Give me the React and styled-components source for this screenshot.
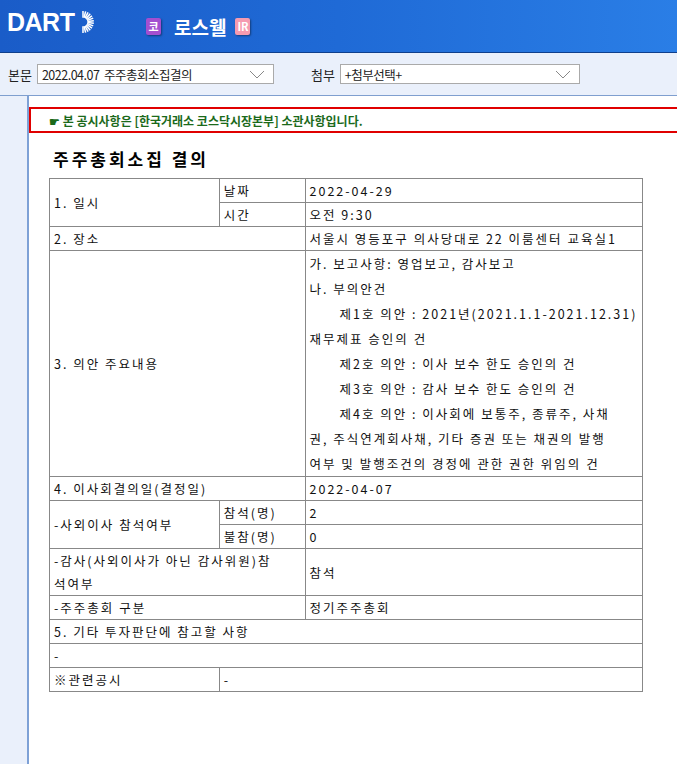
import React from "react";
import styled, { createGlobalStyle } from "styled-components";

const G = createGlobalStyle`
  body{margin:0;font-family:"Noto Sans CJK KR","Noto Sans",sans-serif;background:#fff;}
`;
const Page = styled.div`width:677px;height:764px;overflow:hidden;display:flex;flex-direction:column;`;
const Header = styled.div`
  height:52px;flex:none;display:flex;align-items:center;padding-left:7px;
  background:linear-gradient(90deg,#1a5cc8 0%,#1f6ad6 50%,#2a7ee6 100%);
  border-bottom:1px solid #0f3f8c;
`;
const Logo = styled.div`color:#fff;font-family:"Liberation Sans",Arial,sans-serif;font-weight:700;font-size:25px;letter-spacing:-0.5px;display:flex;align-items:center;width:139px;margin-top:-8px;`;
const Badge = styled.span`
  display:inline-flex;align-items:center;justify-content:center;width:15px;height:17px;
  background:${p=>p.$bg};color:#fff;font-size:11px;font-weight:700;border-radius:2px;
  box-shadow:1px 1px 2px rgba(0,0,0,.4);
`;
const Company = styled.span`color:#fff;font-weight:700;font-size:19px;margin:0 9px 0 13px;`;
const Toolbar = styled.div`
  height:42px;flex:none;background:#eaf0fb;display:flex;align-items:center;padding-left:8px;
  border-bottom:1px solid #7f9fcf;color:#222;
`;
const Label = styled.span`margin-right:5px;font-size:13px;`;
const Select = styled.div`
  width:${p=>p.$w}px;height:20px;border:1px solid #aaa;background:#fff;display:flex;align-items:center;
  justify-content:space-between;padding:0 8px 0 4px;box-sizing:border-box;font-size:12.5px;letter-spacing:-0.5px;
  margin-right:${p=>p.$mr||0}px;
`;
const Body = styled.div`flex:1;display:flex;`;
const Gutter = styled.div`width:27px;background:#eaf0fb;border-right:2px solid #7ea1d6;`;
const Content = styled.div`flex:1;padding-top:11px;`;
const Notice = styled.div`
  height:22px;border:2px solid #e00000;border-right:none;display:flex;align-items:center;padding-left:18px;
  font-size:12px;font-weight:700;color:#1b6a1b;
`;
const Title = styled.h1`margin:13px 0 0 24px;font-size:17px;font-weight:700;letter-spacing:3px;color:#000;height:32px;`;
const Table = styled.table`
  margin-left:20px;width:594px;border-collapse:collapse;font-size:12.5px;letter-spacing:2px;color:#111;
  td{border:1px solid #888;padding:0 4px;height:23px;vertical-align:middle;line-height:23px;}
`;
const Cell = styled.td`vertical-align:top !important;line-height:25px !important;`;
const Indent = styled.span`padding-left:30px;`;
const Chev = () => (
  <svg width="16" height="9" viewBox="0 0 16 9"><path d="M1 1l7 7 7-7" fill="none" stroke="#888" strokeWidth="1"/></svg>
);

export default function App(){
  return (<Page><G/>
    <Header>
      <Logo>DART<svg width="24" height="24" viewBox="0 0 22 22" style={{marginLeft:-3}}>
        {Array.from({length:14}).map((_,i)=>{const a=-Math.PI/2+i*Math.PI/13;return <line key={i} x1={11+4*Math.cos(a)} y1={11+4*Math.sin(a)} x2={11+10*Math.cos(a)} y2={11+10*Math.sin(a)} stroke="#fff" strokeWidth="1.4"/>})}
      </svg></Logo>
      <Badge $bg="#a34fd0">코</Badge>
      <Company>로스웰</Company>
      <Badge $bg="#f59bb0">IR</Badge>
    </Header>
    <Toolbar>
      <Label>본문</Label>
      <Select $w={237} $mr={37}>2022.04.07 &nbsp;주주총회소집결의<Chev/></Select>
      <Label>첨부</Label>
      <Select $w={240}>+첨부선택+<Chev/></Select>
    </Toolbar>
    <Body>
      <Gutter/>
      <Content>
        <Notice>☛ 본 공시사항은 [한국거래소 코스닥시장본부] 소관사항입니다.</Notice>
        <Title>주주총회소집 결의</Title>
        <Table><colgroup><col width="170"/><col width="86"/><col width="338"/></colgroup><tbody>
          <tr><td rowSpan={2}>1. 일시</td><td>날짜</td><td>2022-04-29</td></tr>
          <tr><td>시간</td><td>오전 9:30</td></tr>
          <tr><td colSpan={2}>2. 장소</td><td>서울시 영등포구 의사당대로 22 이룸센터 교육실1</td></tr>
          <tr><td colSpan={2}>3. 의안 주요내용</td><Cell>
            가. 보고사항: 영업보고, 감사보고<br/>나. 부의안건<br/>
            <Indent>제1호 의안 : 2021년(2021.1.1-2021.12.31)</Indent><br/>재무제표 승인의 건<br/>
            <Indent>제2호 의안 : 이사 보수 한도 승인의 건</Indent><br/>
            <Indent>제3호 의안 : 감사 보수 한도 승인의 건</Indent><br/>
            <Indent>제4호 의안 : 이사회에 보통주, 종류주, 사채</Indent><br/>권, 주식연계회사채, 기타 증권 또는 채권의 발행<br/>여부 및 발행조건의 경정에 관한 권한 위임의 건
          </Cell></tr>
          <tr><td colSpan={2}>4. 이사회결의일(결정일)</td><td>2022-04-07</td></tr>
          <tr><td rowSpan={2}>-사외이사 참석여부</td><td>참석(명)</td><td>2</td></tr>
          <tr><td>불참(명)</td><td>0</td></tr>
          <tr><td colSpan={2}>-감사(사외이사가 아닌 감사위원)참<br/>석여부</td><td>참석</td></tr>
          <tr><td colSpan={2}>-주주총회 구분</td><td>정기주주총회</td></tr>
          <tr><td colSpan={3}>5. 기타 투자판단에 참고할 사항</td></tr>
          <tr><td colSpan={3}>-</td></tr>
          <tr><td>※관련공시</td><td colSpan={2}>-</td></tr>
        </tbody></Table>
      </Content>
    </Body>
  </Page>);
}
